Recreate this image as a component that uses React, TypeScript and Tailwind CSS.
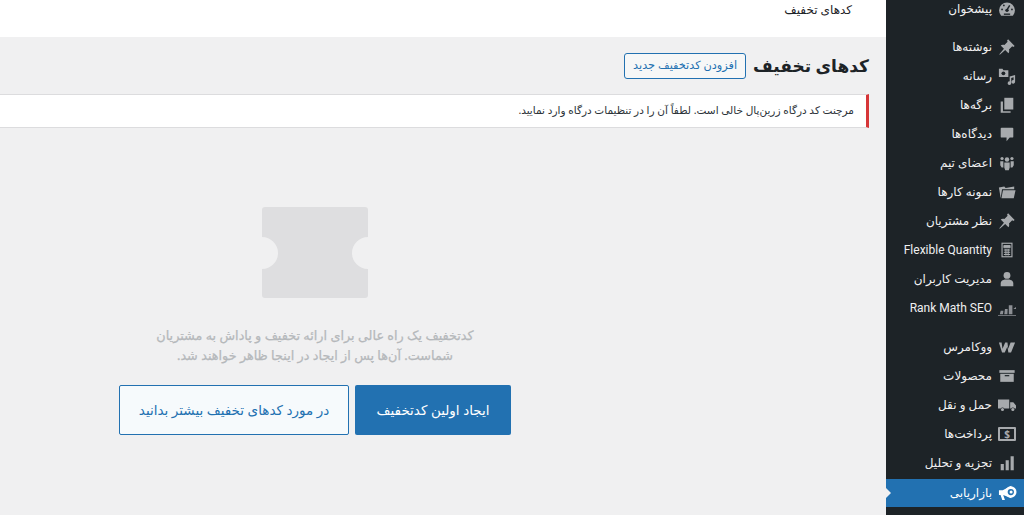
import React from "react";

const c = "#a7aaad";
const d = "#1d2327";
const s = "w-[18px] h-[18px] shrink-0";
const Pin = () => <svg viewBox="0 0 20 20" className={s} fill={c}><path d="M11.2 1.500l7.300 7.300-1.500 1.200-1.200-.7-3.600 3.600c.5 1.500.3 3-.6 4.100L8 13.400 2 18.500l-.5-.5 5.100-6L3 8.400c1.100-.9 2.600-1.100 4.100-.6l3.600-3.600-.7-1.200z"/></svg>;
const Gauge = () => <svg viewBox="0 0 20 20" className={s}><path d="M3.500 17.500A8.800 8.800 0 1 1 16.500 17.500z" fill={c}/><path d="M10 11l3-5" stroke={d} strokeWidth="1.600"/><circle cx="10" cy="11.500" r="1.900" fill={d}/><circle cx="4.500" cy="10.500" r="1" fill={d}/><circle cx="6.500" cy="6" r="1" fill={d}/><circle cx="15.500" cy="10.500" r="1" fill={d}/><rect x="6.500" y="15" width="7" height="1.500" fill={d}/></svg>;
const Media = () => <svg viewBox="0 0 20 20" className={s} fill={c}><path d="M1 2h4l1 1.500h5.500V11H1z"/><circle cx="6" cy="7" r="2.100" fill={d}/><path d="M13 10.500l6-1.500v7.500a2 2 0 1 1-1.700-2v-3l-2.600.7V18a2 2 0 1 1-1.700-2z"/></svg>;
const Pages = () => <svg viewBox="0 0 20 20" className={s} fill={c}><path d="M7 2h10v13H7z"/><path d="M3 6h2.500v11H14v1.500H3z"/></svg>;
const Comment = () => <svg viewBox="0 0 20 20" className={s} fill={c}><path d="M4 3h12a1 1 0 0 1 1 1v9a1 1 0 0 1-1 1h-3l-3.500 4v-4H4a1 1 0 0 1-1-1V4a1 1 0 0 1 1-1z"/></svg>;
const Groups = () => <svg viewBox="0 0 20 20" className={s} fill={c}><circle cx="10" cy="6" r="2.500"/><circle cx="4.500" cy="5" r="1.800"/><circle cx="15.500" cy="5" r="1.800"/><path d="M7 9.500h6V15l-1 3H8l-1-3zM2.500 8H6v7H4l-1.500-2.500zM14 8h3.500v4.500L16 15h-2z"/></svg>;
const Folder = () => <svg viewBox="0 0 20 20" className={s} fill={c}><path d="M1 5l6-1 1.500 1.500L18 4v3H4.500L3 17zM5.500 8H19.500L17.500 17H3.800z"/></svg>;
const Calc = () => <svg viewBox="0 0 20 20" className={s} fill="none" stroke={c}><rect x="4.500" y="2.500" width="11" height="15" strokeWidth="1.300"/><path d="M6.500 5h7v2.500h-7z" fill={c}/><path d="M6.500 10h7M6.500 12.500h7M6.500 15h7M8.800 9v7M11.300 9v7" strokeWidth="1.200"/></svg>;
const Person = () => <svg viewBox="0 0 20 20" className={s} fill={c}><circle cx="10" cy="6" r="3.800"/><path d="M3 18v-3.500C3 12 5.500 11 7.500 10.500h5C14.500 11 17 12 17 14.500V18z"/></svg>;
const RankMath = () => <svg viewBox="0 0 20 20" className={s} fill="#8c8f94"><path d="M2 17l1-4h3l-.5 4zM7 17l.7-6h3L10.500 17zM12 17V7h4v10zM0 18h20v1H0zM17 11l3-2v2z"/></svg>;
const Woo = () => <svg viewBox="0 0 20 20" className={s} fill={c}><path d="M1 5h3l1 7 3-7h2.500l.8 7 2.700-7H19l-4.500 11h-3L10.500 9.500 7.500 16h-3z"/></svg>;
const Box = () => <svg viewBox="0 0 20 20" className={s} fill={c}><path d="M1.500 3.500h17v3h-17z"/><path d="M2.500 7.500h15v9h-15z"/><rect x="7.500" y="9" width="5" height="1.300" fill={d}/></svg>;
const Truck = () => <svg viewBox="0 0 20 20" className={s} fill={c}><path d="M0 4h12.500v10H7a2.200 2.200 0 0 0-4 0H0zM13.500 7H17l3 3.500V14h-1.500a2.200 2.200 0 0 0-4 0h-1z"/><circle cx="5" cy="15" r="1.700"/><circle cx="16.500" cy="15" r="1.700"/></svg>;
const Money = () => (
  <span className="relative w-[18px] h-[14px] shrink-0 border-[2px] border-[#a7aaad] rounded-[1px] flex items-center justify-center text-[10px] font-bold leading-none text-[#a7aaad]">$</span>
);
const Bars = () => <svg viewBox="0 0 20 20" className={s} fill={c}><path d="M3 11h3.500v7H3zM8.500 7H12v11H8.500zM14 2.500h3.500V18H14z"/></svg>;
const Mega = () => <svg viewBox="0 0 20 20" className="w-[19px] h-[19px] shrink-0" fill="#fff"><path d="M1 7.500h4L14 3v13L5.500 12.500l1.800 5.500H4.500L2.700 12.500H1z"/><circle cx="13.500" cy="9.500" r="6"/><circle cx="13.500" cy="9.500" r="3.300" fill="#2271b1"/><circle cx="13.800" cy="9.500" r="1.600"/></svg>;

type Item = { t: string; i: React.ReactNode; mt?: string; h?: string };
const items: Item[] = [
  { t: "پیشخوان", i: <Gauge />, h: "h-[18px]" },
  { t: "نوشته‌ها", i: <Pin />, mt: "mt-[14px]" },
  { t: "رسانه", i: <Media /> },
  { t: "برگه‌ها", i: <Pages /> },
  { t: "دیدگاه‌ها", i: <Comment /> },
  { t: "اعضای تیم", i: <Groups /> },
  { t: "نمونه کارها", i: <Folder /> },
  { t: "نظر مشتریان", i: <Pin /> },
  { t: "Flexible Quantity", i: <Calc /> },
  { t: "مدیریت کاربران", i: <Person /> },
  { t: "Rank Math SEO", i: <RankMath /> },
  { t: "ووکامرس", i: <Woo />, mt: "mt-[10px]" },
  { t: "محصولات", i: <Box /> },
  { t: "حمل و نقل", i: <Truck /> },
  { t: "پرداخت‌ها", i: <Money /> },
  { t: "تجزیه و تحلیل", i: <Bars /> },
];

export default function App() {
  return (
    <div dir="rtl" className="flex w-[1024px] h-[515px] overflow-hidden bg-[#f0f0f1] text-[#1d2327]" style={{ fontFamily: '"Noto Sans", Roboto, "DejaVu Sans", sans-serif' }}>
      <aside className="w-[138px] shrink-0 bg-[#1d2327] h-full">
        {items.map((it) => (
          <div key={it.t} className={`flex items-center gap-[4px] pr-[6px] text-[12px] text-[#f0f0f1] ${it.h ?? "h-[29px]"} ${it.mt ?? ""}`}>
            <span className="w-[22px] flex justify-center shrink-0">{it.i}</span>
            <span className="whitespace-nowrap" style={/^[A-Z]/.test(it.t) ? { fontFamily: "Roboto, sans-serif" } : undefined}>{it.t}</span>
          </div>
        ))}
        <div className="relative mt-[1.500px] h-[28px] bg-[#2271b1] text-white flex items-center gap-[4px] pr-[6px] text-[12px]">
          <span className="w-[22px] flex justify-center shrink-0"><Mega /></span>
          <span>بازاریابی</span>
          <span className="absolute left-0 top-[9px] border-y-[5px] border-y-transparent border-l-[5px] border-l-[#f0f0f1]" />
        </div>
      </aside>
      <main className="flex-1 min-w-0 flex flex-col">
        <div className="h-[37px] bg-white shrink-0 pr-[34px] pt-[1px] text-[12px]">کدهای تخفیف</div>
        <div className="flex items-center gap-[7px] h-[57px] shrink-0 pr-[17px]">
          <h1 className="text-[17px] font-bold leading-none">کدهای تخفیف</h1>
          <button className="h-[26px] w-[122px] border border-[#2271b1] rounded-[3px] text-[11.300px] text-[#2271b1] bg-[#f6f7f7] whitespace-nowrap">افزودن کدتخفیف جدید</button>
        </div>
        <div className="h-[34px] shrink-0 mr-[17px] bg-white border-r-[3px] border-r-[#d63638] border-y border-y-[#dcdcde] flex items-center pr-[12px] text-[10.500px] text-[#2c3338]">مرچنت کد درگاه زرین‌پال خالی است. لطفاً آن را در تنظیمات درگاه وارد نمایید.</div>
        <div className="flex-1 flex flex-col items-center pt-[79px] w-[630px] mr-[256px]">
          <svg viewBox="0 0 106 91" className="w-[106px] h-[91px] shrink-0">
            <path fill="#dedee0" d="M3 0H103a3 3 0 0 1 3 3V30a16 16 0 0 0 0 32V88a3 3 0 0 1-3 3H3a3 3 0 0 1-3-3V62a16 16 0 0 0 0-32V3a3 3 0 0 1 3-3z" />
          </svg>
          <p className="mt-[27px] w-[340px] text-center text-[12.800px] leading-[20px] text-[#b5b8bb] [-webkit-text-stroke:0.25px_#b5b8bb]">کدتخفیف یک راه عالی برای ارائه تخفیف و پاداش به مشتریان شماست. آن‌ها پس از ایجاد در اینجا ظاهر خواهند شد.</p>
          <div className="flex gap-[6px] mt-[20px]">
            <button className="w-[156px] h-[50px] rounded-[2px] bg-[#2271b1] text-white text-[13.500px] whitespace-nowrap">ایجاد اولین کدتخفیف</button>
            <button className="w-[230px] h-[50px] rounded-[2px] border border-[#2271b1] bg-[#f6fafc] text-[#2271b1] text-[13.500px] whitespace-nowrap">در مورد کدهای تخفیف بیشتر بدانید</button>
          </div>
        </div>
      </main>
    </div>
  );
}
